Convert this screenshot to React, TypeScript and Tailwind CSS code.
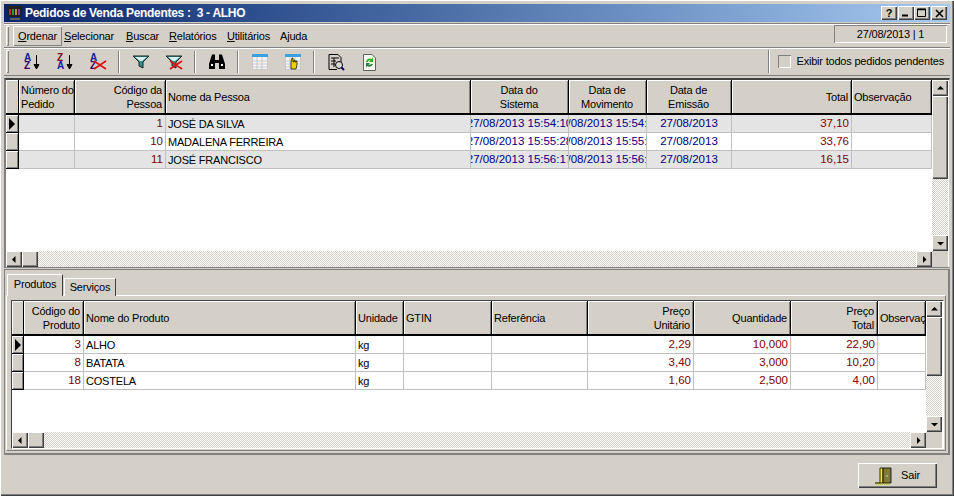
import type { ReactNode } from "react"

const FACE = "bg-[#d4d0c8]"
const BTN =
  "bg-[#d4d0c8] shadow-[inset_1px_1px_0_#fff,inset_-1px_-1px_0_#404040,inset_-2px_-2px_0_#808080]"
const CHECKER =
  "bg-[repeating-conic-gradient(#d4d0c8_0%_25%,#ffffff_0%_50%)] bg-size-[2px_2px]"
const NUM = "justify-end text-[#800000] text-[11.5px] tracking-normal"
const DATE = "justify-center text-[#000080] text-[11.5px] tracking-normal"

type Col = { w: string; title: ReactNode; head: string; cell: string }

const TOP_COLS: Col[] = [
  { w: "w-[56px]", title: <>Número do<br />Pedido</>, head: "text-left", cell: "" },
  { w: "w-[91px]", title: <>Código da<br />Pessoa</>, head: "text-right", cell: NUM },
  { w: "w-[305px]", title: "Nome da Pessoa", head: "text-left", cell: "justify-start" },
  { w: "w-[98px]", title: <>Data do<br />Sistema</>, head: "text-center", cell: DATE },
  { w: "w-[78px]", title: <>Data de<br />Movimento</>, head: "text-center", cell: DATE },
  { w: "w-[85px]", title: <>Data de<br />Emissão</>, head: "text-center", cell: DATE },
  { w: "w-[120px]", title: "Total", head: "text-right", cell: NUM },
  { w: "w-[80px]", title: "Observação", head: "text-left", cell: "" },
]

const TOP_ROWS = [
  ["", "1", "JOSÉ DA SILVA", "27/08/2013 15:54:10", "27/08/2013 15:54:10", "27/08/2013", "37,10", ""],
  ["", "10", "MADALENA FERREIRA", "27/08/2013 15:55:28", "27/08/2013 15:55:28", "27/08/2013", "33,76", ""],
  ["", "11", "JOSÉ FRANCISCO", "27/08/2013 15:56:17", "27/08/2013 15:56:17", "27/08/2013", "16,15", ""],
]

const BOTTOM_COLS: Col[] = [
  { w: "w-[60px]", title: <>Código do<br />Produto</>, head: "text-right", cell: NUM },
  { w: "w-[272px]", title: "Nome do Produto", head: "text-left", cell: "justify-start" },
  { w: "w-[48px]", title: "Unidade", head: "text-left", cell: "justify-start" },
  { w: "w-[88px]", title: "GTIN", head: "text-left", cell: "" },
  { w: "w-[96px]", title: "Referência", head: "text-left", cell: "" },
  { w: "w-[106px]", title: <>Preço<br />Unitário</>, head: "text-right", cell: NUM },
  { w: "w-[97px]", title: "Quantidade", head: "text-right", cell: NUM },
  { w: "w-[87px]", title: <>Preço<br />Total</>, head: "text-right", cell: NUM },
  { w: "w-[48px]", title: "Observação", head: "text-left", cell: "" },
]

const BOTTOM_ROWS = [
  ["3", "ALHO", "kg", "", "", "2,29", "10,000", "22,90", ""],
  ["8", "BATATA", "kg", "", "", "3,40", "3,000", "10,20", ""],
  ["18", "COSTELA", "kg", "", "", "1,60", "2,500", "4,00", ""],
]

function Arrow({ dir }: { dir: "up" | "down" | "left" | "right" }) {
  const pts = {
    up: "1,5.5 8,5.5 4.5,2",
    down: "1,3 8,3 4.5,6.5",
    left: "5.5,1 5.5,8 2,4.5",
    right: "3,1 3,8 6.5,4.5",
  }[dir]
  return (
    <svg width="9" height="9" viewBox="0 0 9 9">
      <polygon points={pts} fill="#000" />
    </svg>
  )
}

function ScrollBtn({ dir }: { dir: "up" | "down" | "left" | "right" }) {
  return (
    <div className={`${BTN} w-4 h-4 shrink-0 flex items-center justify-center`}>
      <Arrow dir={dir} />
    </div>
  )
}

function HScroll() {
  return (
    <div className={`${CHECKER} h-4 flex shrink-0`}>
      <ScrollBtn dir="left" />
      <div className={`${BTN} w-4 h-4`} />
      <div className="flex-1" />
      <ScrollBtn dir="right" />
    </div>
  )
}

function VScroll({ thumb }: { thumb: string }) {
  return (
    <div className={`${CHECKER} w-4 flex-1 flex flex-col`}>
      <ScrollBtn dir="up" />
      <div className={`${BTN} w-4 ${thumb}`} />
      <div className="flex-1" />
      <ScrollBtn dir="down" />
    </div>
  )
}

function DataGrid({
  cols,
  rows,
  indW,
  headH,
  striped,
}: {
  cols: Col[]
  rows: string[][]
  indW: string
  headH: string
  striped: boolean
}) {
  return (
    <div className="flex-1 min-h-0 bg-white overflow-hidden">
      <div className={`flex ${headH}`}>
        <div className={`${indW} ${FACE} shrink-0 border-r border-b-2 border-black shadow-[inset_1px_1px_0_#fff]`} />
        {cols.map((c, i) => (
          <div
            key={i}
            className={`${c.w} ${c.head} ${FACE} shrink-0 overflow-hidden whitespace-nowrap border-r border-b-2 border-black shadow-[inset_1px_1px_0_#fff,inset_-1px_0_0_#808080] pl-0.5 pr-[3px] pt-px flex flex-col justify-center leading-[14px]`}
          >
            <div>{c.title}</div>
          </div>
        ))}
      </div>
      {rows.map((r, ri) => (
        <div key={ri} className={`flex h-[18px] ${striped && ri % 2 === 0 ? "bg-[#e4e4e4]" : "bg-white"}`}>
          <div className={`${indW} ${FACE} shrink-0 border-r border-b border-black shadow-[inset_1px_1px_0_#fff,inset_-1px_-1px_0_#808080] flex items-center justify-center`}>
            {ri === 0 && (
              <svg width="8" height="12" viewBox="0 0 8 12">
                <polygon points="1,0 7,6 1,12" fill="#000" />
              </svg>
            )}
          </div>
          {cols.map((c, i) => (
            <div
              key={i}
              className={`${c.w} ${c.cell} shrink-0 flex items-center pt-px overflow-hidden whitespace-nowrap border-r border-b border-[#c0c0c0] ${c.cell.includes("justify-center") ? "" : "px-[2px]"}`}
            >
              <span className="shrink-0">{r[i]}</span>
            </div>
          ))}
        </div>
      ))}
    </div>
  )
}

function U({ children }: { children: ReactNode }) {
  return <span className="underline">{children}</span>
}

function Letters({ top, bottom, topFill, bottomFill }: { top: string; bottom: string; topFill: string; bottomFill: string }) {
  return (
    <>
      <text x="1" y="8" fontSize="10" fontWeight="700" fontFamily="Liberation Sans" fill={topFill}>{top}</text>
      <text x="1" y="16" fontSize="10" fontWeight="700" fontFamily="Liberation Sans" fill={bottomFill}>{bottom}</text>
    </>
  )
}

const RedX = () => <path d="M5 8 L17 16 M17 8 L5 16" stroke="#e01010" strokeWidth="1.6" />

const DownArrow = () => <path d="M13.5 2V12M11 11.5H16L13.5 16Z" stroke="#000" strokeWidth="1" fill="#000" />

const Funnel = () => (
  <>
    <path d="M1 3H17L11 9V15L7 13V9Z" fill="#2f8f8f" stroke="#222" strokeWidth="1" />
    <path d="M3 4H15L10 8H8Z" fill="#d8f0f0" />
  </>
)

const Sheet = () => (
  <>
    <rect x="1.5" y="1.5" width="15" height="15" fill="#f4f4f4" stroke="#c8c8c8" />
    <rect x="1" y="1" width="16" height="3" fill="#3aa0e0" />
    <path d="M1 8H17M1 11H17M1 14H17M6 4V17M11 4V17" stroke="#c8c8c8" />
  </>
)

const ICONS: ReactNode[] = [
  <><Letters top="A" bottom="Z" topFill="#1020a0" bottomFill="#400060" /><DownArrow /></>,
  <><Letters top="Z" bottom="A" topFill="#800020" bottomFill="#1020a0" /><DownArrow /></>,
  <><Letters top="A" bottom="Z" topFill="#1020a0" bottomFill="#400060" /><RedX /></>,
  <Funnel />,
  <><Funnel /><RedX /></>,
  <>
    <path d="M4 1.5H7V7H11V1.5H14L17 11V16H11V10H7V16H1V11Z" fill="#000" />
    <path d="M3 11H5V13H3ZM13 11H15V13H13Z" fill="#fff" />
  </>,
  <Sheet />,
  <><Sheet /><path d="M7 16V9L8 5H9V9H10V7H11V9H12V8H13V12L12 16Z" fill="#f0d000" stroke="#000" strokeWidth=".7" /></>,
  <>
    <path d="M2 1.5H11L14 4.5V9M2 1.5V16.5H10M4 5H12M4 8H9M4 11H8M7 5V14" stroke="#000" fill="none" />
    <circle cx="12" cy="12" r="3.5" fill="#d8d8d8" stroke="#000" />
    <path d="M14.5 14.5L17 17" stroke="#000080" strokeWidth="2" />
  </>,
  <>
    <path d="M3.5 1.5H12L15.5 5V17.5H3.5Z" fill="#f8f8f0" stroke="#606060" />
    <path d="M6 9A4 4 0 0 1 12 6L13 4V9H9L10.5 7.5A2 2 0 0 0 8 9Z" fill="#30b020" />
    <path d="M13 11A4 4 0 0 1 7 13L6 15V10H10L8.5 11.5A2 2 0 0 0 11 11Z" fill="#208040" />
  </>,
]

function Tool({ i }: { i: number }) {
  return (
    <div className="w-[33px] h-full shrink-0 flex items-center justify-center">
      <svg width="18" height="18" viewBox="0 0 18 18">{ICONS[i]}</svg>
    </div>
  )
}

const Sep = () => <div className="w-[2px] h-[22px] mx-1 shrink-0 border-l border-r border-l-[#808080] border-r-white" />
const Grip = () => <div className="w-[3px] shrink-0 bg-[#d4d0c8] shadow-[inset_1px_1px_0_#fff,inset_-1px_-1px_0_#808080]" />

function TitleBtn({ children, className = "" }: { children: ReactNode; className?: string }) {
  return (
    <div className={`${BTN} w-4 h-[14px] flex items-center justify-center text-black ${className}`}>{children}</div>
  )
}

export default function App() {
  return (
    <div
      className={`w-[954px] h-[496px] ${FACE} flex flex-col pt-1 px-1 overflow-hidden text-[11px] tracking-[-0.2px] text-black font-['Liberation_Sans',Arial,sans-serif] shadow-[inset_1px_1px_0_#fff,inset_-1px_-1px_0_#404040,inset_-2px_-2px_0_#808080]`}
    >
      <div className="h-[18px] shrink-0 flex items-center bg-linear-to-r from-[#0a246a] to-[#a6caf0] pl-[3px] pr-[3px]">
        <svg width="16" height="16" viewBox="0 0 16 16" className="shrink-0">
          <path d="M0 1H16L14 12H2Z" fill="#202020" />
          <path d="M3 4V10" stroke="#e03030" strokeWidth="1.5" />
          <path d="M6 4V10" stroke="#30c030" strokeWidth="1.5" />
          <path d="M9 4V10" stroke="#e0c030" strokeWidth="1.5" />
          <path d="M12 4V10" stroke="#a040d0" strokeWidth="1.5" />
          <path d="M3 13H13V15H3Z" fill="#606060" />
        </svg>
        <span className="ml-[2px] text-white font-bold text-[12px] tracking-[-0.3px] whitespace-pre">Pedidos de Venda Pendentes :  3 - ALHO</span>
        <div className="ml-auto flex">
          <TitleBtn className="mr-[1px]"><span className="font-bold text-[11px] leading-none">?</span></TitleBtn>
          <TitleBtn>
            <svg width="8" height="8" viewBox="0 0 8 8"><path d="M0 6.5H6" stroke="#000" strokeWidth="2" /></svg>
          </TitleBtn>
          <TitleBtn className="mr-[1px]">
            <svg width="10" height="10" viewBox="0 0 10 10"><path d="M.5 1H8.5V8.5H.5Z" fill="none" stroke="#000" /><path d="M0 1.5H9" stroke="#000" strokeWidth="1.5" /></svg>
          </TitleBtn>
          <TitleBtn>
            <svg width="9" height="9" viewBox="0 0 9 9"><path d="M1 1L8 8M8 1L1 8" stroke="#000" strokeWidth="1.6" /></svg>
          </TitleBtn>
        </div>
      </div>

      <div className="h-[24px] mt-px shrink-0 flex items-stretch border-t border-t-[#808080] shadow-[inset_0_1px_0_#fff] pt-[2px] pb-[1px] pl-[2px]">
        <Grip />
        <div className="ml-[4px] w-[49px] flex items-center justify-center shadow-[inset_1px_1px_0_#fff,inset_-1px_-1px_0_#808080]"><span><U>O</U>rdenar</span></div>
        <div className="ml-[2px] w-[62px] flex items-center justify-start"><span><U>S</U>elecionar</span></div>
        <div className="w-[43px] flex items-center"><span><U>B</U>uscar</span></div>
        <div className="w-[58px] flex items-center"><span><U>R</U>elatórios</span></div>
        <div className="w-[53px] flex items-center"><span><U>U</U>tilitários</span></div>
        <div className="flex items-center"><span>Ajuda</span></div>
        <div className="ml-auto mr-[3px] w-[113px] h-[18px] self-start -mt-[1px] flex items-center justify-center shadow-[inset_1px_1px_0_#808080,inset_-1px_-1px_0_#fff]">27/08/2013 | 1</div>
      </div>

      <div className="h-[29px] shrink-0 flex items-stretch border-y border-t-[#808080] border-b-[#808080] shadow-[inset_0_1px_0_#fff] pt-[2px] pb-[2px] pl-[2px]">
        <Grip />
        <div className="ml-[6px] flex items-center h-full">
          <Tool i={0} /><Tool i={1} /><Tool i={2} /><Sep />
          <Tool i={3} /><Tool i={4} /><Sep />
          <Tool i={5} /><Sep />
          <Tool i={6} /><Tool i={7} /><Sep />
          <Tool i={8} /><Tool i={9} />
        </div>
        <div className="ml-auto flex items-center border-l border-l-[#808080] shadow-[inset_1px_0_0_#fff] pl-[3px]">
          <Grip />
          <div className="ml-[3px] w-[13px] h-[13px] bg-[#d4d0c8] shadow-[inset_1px_1px_0_#808080,inset_-1px_-1px_0_#fff]" />
          <span className="ml-[6px] mr-[6px] whitespace-nowrap">Exibir todos pedidos pendentes</span>
        </div>
      </div>

      <div className="h-[190px] mt-[2px] shrink-0 flex bg-white border-t-2 border-l-2 border-b border-r border-t-[#404040] border-l-[#808080] border-b-[#808080] border-r-[#d4d0c8]">
        <div className="w-[926px] shrink-0 flex flex-col">
          <DataGrid cols={TOP_COLS} rows={TOP_ROWS} indW="w-[13px]" headH="h-[35px]" striped />
          <HScroll />
        </div>
        <div className="w-4 flex flex-col">
          <VScroll thumb="h-[83px]" />
          <div className={`${FACE} h-4 shrink-0`} />
        </div>
      </div>

      <div className="flex-1 min-h-0 mt-[1px] flex flex-col">
        <div className="h-[186px] shrink-0 flex flex-col border-t border-b-2 border-l border-r-2 border-t-[#808080] border-l-[#808080] border-b-[#808080] border-r-[#808080] pt-[4px] pr-[2px] pb-[2px] pl-px">
          <div className="h-[22px] shrink-0 flex items-end relative z-10 -mb-px ml-px">
            <div className={`${FACE} w-[56px] h-[22px] border-t border-l border-t-white border-l-white border-r border-r-[#404040] flex items-center justify-center pb-[2px]`}>Produtos</div>
            <div className={`${FACE} ml-px w-[52px] h-[18px] border-t border-l border-t-white border-l-white border-r border-r-[#404040] flex items-center justify-center`}>Serviços</div>
          </div>
          <div className="flex-1 min-h-0 flex border-t border-l border-t-white border-l-white border-r border-b border-r-[#808080] border-b-[#808080] pt-[4px] pl-[4px] pr-px pb-px">
            <div className="flex-1 min-w-0 flex bg-white border-t border-l border-t-[#404040] border-l-[#404040] border-b border-r border-b-white border-r-white">
              <div className="w-[914px] shrink-0 flex flex-col">
                <DataGrid cols={BOTTOM_COLS} rows={BOTTOM_ROWS} indW="w-[12px]" headH="h-[35px]" striped={false} />
                <HScroll />
              </div>
              <div className="w-4 flex flex-col">
                <VScroll thumb="h-[59px]" />
                <div className={`${FACE} h-4 shrink-0`} />
              </div>
            </div>
          </div>
        </div>
        <div className="flex-1 flex justify-end items-start pt-[8px] pr-[13px]">
          <div className={`${BTN} w-[79px] h-[25px] flex items-center justify-center gap-[8px]`}>
            <svg width="18" height="18" viewBox="0 0 18 18">
              <path d="M0 16H5" stroke="#000" />
              <path d="M5 1H8V16H5Z" fill="#f8f000" stroke="#000" strokeWidth=".8" />
              <path d="M8 1H16V16H8Z" fill="#807840" stroke="#000" strokeWidth=".8" />
              <path d="M11 9H13" stroke="#d8d8d8" />
              <path d="M1 17H15" stroke="#b0a000" strokeDasharray="1 1" />
            </svg>
            <span>Sair</span>
          </div>
        </div>
      </div>
    </div>
  )
}
